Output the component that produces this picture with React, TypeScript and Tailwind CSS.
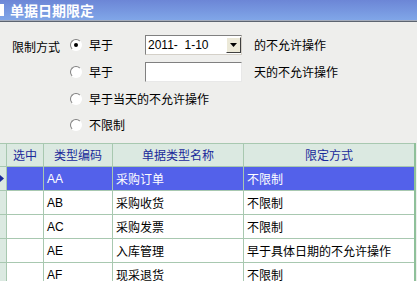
import React from 'react';

const rows = [
  { code: 'AA', name: '采购订单', mode: '不限制', active: true },
  { code: 'AB', name: '采购收货', mode: '不限制' },
  { code: 'AC', name: '采购发票', mode: '不限制' },
  { code: 'AE', name: '入库管理', mode: '早于具体日期的不允许操作' },
  { code: 'AF', name: '现采退货', mode: '不限制' },
];

function Radio({ checked }: { checked?: boolean }) {
  return (
    <span className="relative inline-block h-[12px] w-[12px] shrink-0 rounded-full border border-t-[#808080] border-l-[#808080] border-r-white border-b-white bg-white">
      {checked && <span className="absolute left-[3px] top-[3px] h-[4px] w-[4px] rounded-full bg-black" />}
    </span>
  );
}

const font = { fontFamily: '"Noto Sans CJK SC", "Liberation Sans", sans-serif' };

export default function App() {
  return (
    <div className="h-[281px] w-[417px] overflow-hidden bg-[#eeeeec] text-[12px] text-black" style={font}>
      {/* title bar */}
      <div className="flex h-[20px] items-center bg-gradient-to-b from-[#6c86d6] to-[#80a6e8] pl-0">
        <span className="mr-[6px] h-[12px] w-[4px] bg-white" />
        <span className="text-[14px] font-bold leading-none text-white">单据日期限定</span>
      </div>
      <div className="h-[2px] border-b border-[#5c6470] bg-[#a4acbc]" />

      {/* form */}
      <div className="flex pl-[12px] pt-[13px]">
        <span className="mt-[3px] w-[58px]">限制方式</span>
        <div className="flex flex-col">
          <div className="flex h-[20px] items-center">
            <Radio checked />
            <span className="ml-[7px] w-[56px]">早于</span>
            <div className="flex h-[20px] w-[97px] items-center border border-t-[#808080] border-l-[#808080] border-r-[#d4d0c8] border-b-[#d4d0c8] bg-white pl-[2px]">
              <span className="flex-1 text-[12px]" style={{ fontFamily: '"Liberation Sans", sans-serif' }}>2011-&nbsp;&nbsp;1-10</span>
              <span className="flex h-[16px] w-[15px] items-center justify-center border border-t-white border-l-white border-r-[#404040] border-b-[#404040] bg-[#ece9d8]">
                <svg width="7" height="4" viewBox="0 0 7 4"><path d="M0 0h7L3.5 4z" fill="#000" /></svg>
              </span>
            </div>
            <span className="ml-[12px]">的不允许操作</span>
          </div>
          <div className="mt-[7px] flex h-[20px] items-center">
            <Radio />
            <span className="ml-[7px] w-[56px]">早于</span>
            <div className="h-[20px] w-[97px] border border-t-[#808080] border-l-[#808080] border-r-[#e8e8e8] border-b-[#e8e8e8] bg-white" />
            <span className="ml-[12px]">天的不允许操作</span>
          </div>
          <div className="mt-[7px] flex h-[20px] items-center">
            <Radio />
            <span className="ml-[7px]">早于当天的不允许操作</span>
          </div>
          <div className="mt-[6px] flex h-[20px] items-center">
            <Radio />
            <span className="ml-[7px]">不限制</span>
          </div>
        </div>
      </div>

      {/* grid */}
      <div className="mt-[8px] w-[416px] border-r-2 border-[#8fc09a]">
        <div className="flex h-[24px] border-y border-[#a8c8b0] bg-[#dbe9e1] text-[#1a2a9a]">
          <div className="w-[7px] border-r border-[#a8c8b0]" />
          <div className="flex w-[37px] items-center justify-center border-r border-[#a8c8b0]">选中</div>
          <div className="flex w-[69px] items-center justify-center border-r border-[#a8c8b0]">类型编码</div>
          <div className="flex w-[131px] items-center justify-center border-r border-[#a8c8b0]">单据类型名称</div>
          <div className="flex flex-1 items-center justify-center">限定方式</div>
        </div>
        {rows.map((r) => (
          <div key={r.code} className="flex h-[24px] border-b border-[#a8c8b0]">
            <div className="flex w-[7px] items-center border-r border-[#a8c8b0] bg-[#dbe9e1]">
              {r.active && <svg width="4" height="7" viewBox="0 0 4 7"><path d="M0 0l4 3.5L0 7z" fill="#1a2a9a" /></svg>}
            </div>
            <div className={`w-[37px] border-r border-[#a8c8b0] ${r.active ? 'bg-[#5361ea]' : 'bg-white'}`} />
            <div className={`flex w-[69px] items-center border-r border-[#a8c8b0] pl-[3px] ${r.active ? 'bg-[#5361ea] text-white' : 'bg-white'}`} style={{ fontFamily: '"Liberation Sans", sans-serif' }}>{r.code}</div>
            <div className={`flex w-[131px] items-center border-r border-[#a8c8b0] pl-[3px] ${r.active ? 'bg-[#5361ea] text-white' : 'bg-white'}`}>{r.name}</div>
            <div className={`flex flex-1 items-center pl-[3px] ${r.active ? 'bg-[#5361ea] text-white' : 'bg-white'}`}>{r.mode}</div>
          </div>
        ))}
      </div>
    </div>
  );
}
